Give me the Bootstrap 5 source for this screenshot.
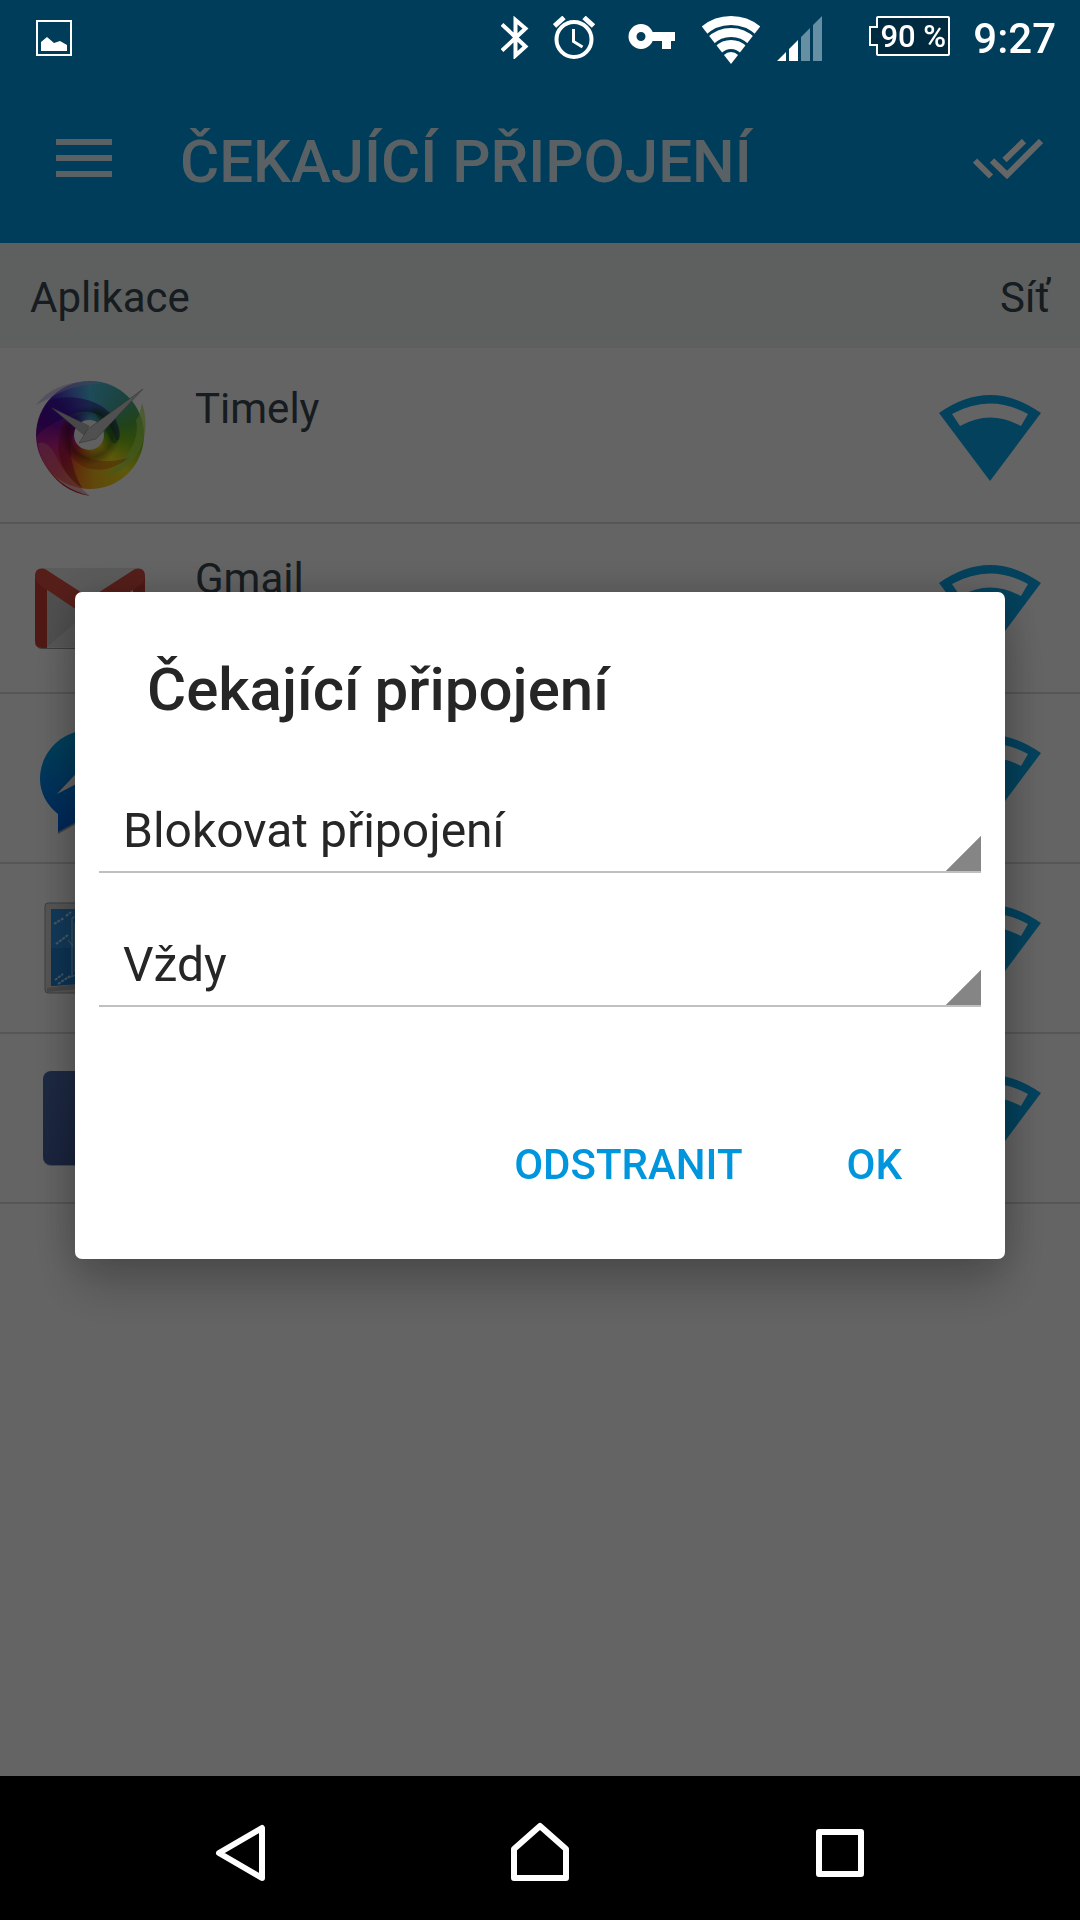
<!DOCTYPE html>
<html lang="cs">
<head>
<meta charset="utf-8">
<meta name="viewport" content="width=device-width, initial-scale=1">
<title>Čekající připojení</title>
<link rel="stylesheet" href="https://cdn.jsdelivr.net/npm/bootstrap@5.3.0/dist/css/bootstrap.min.css">
<style>
  body { font-family: Roboto, "Noto Sans", sans-serif; background: #fafafa; font-size: 42px; line-height: 50px; color: #37474f; }
  svg { display: block; flex: none; }
  .top-area { background: #0099e0; }
  .status-bar { height: 75px; padding: 16px 24px 0 36px; color: #fff; z-index: 1070; line-height: 46px; }
  .status-icons { gap: 17px; }
  .battery-nub { width: 9px; height: 20px; margin: 10px -2px 0 0; border: 2px solid #fff; border-right: 0; background: #002a3f; z-index: 1; }
  .battery-box { width: 74px; height: 40px; border: 2px solid #fff; border-radius: 2px; background: #002a3f; font-size: 31px; line-height: 38px; margin-right: 6px; }
  .app-bar { height: 168px; padding: 0 37px 0 56px; gap: 68px; }
  .app-title { font-size: 60px; line-height: 70px; padding-top: 6px; color: #e1f3fb; }
  .list-head { background: #e9f0ee; padding: 30px 30px 25px; }
  .conn-list { padding-top: 6px; }
  .conn-row { height: 170px; padding: 0 39px 0 30px; gap: 45px; border-bottom: 2px solid #d6d6d6; }
  .conn-name { padding-top: 30px; }
  .app-icon { width: 120px; height: 120px; }
  .timely-wheel { position: relative; }
  .timely-disc { position: absolute; inset: 3px 6px 9px; border-radius: 50%;
    background: conic-gradient(#4bbbe0, #46a8a0 40deg, #55a83c 75deg, #7cbc18 100deg, #e8dc1c 135deg, #efb41c 175deg, #f0781c 200deg, #e02f4a 225deg, #c0208c 255deg, #7a0c9e 285deg, #4c28c0 315deg, #5580dc 340deg, #4bbbe0); }
  .timely-wheel svg { position: relative; }
  .dim-layer { --bs-backdrop-opacity: .6; }
  .dialog-layer { padding: 75px 75px 144px; }
  .dialog-box { border-radius: 7px; padding: 63px 24px 69px; color: #262626; box-shadow: 0 28px 50px rgba(0,0,0,.2), 0 0 40px rgba(0,0,0,.2); }
  .dialog-title { font-size: 60px; line-height: 70px; margin: 0 48px 52px; }
  .spinner-select { appearance: none; display: block; width: 100%; height: 96px; padding: 26px 60px 12px 24px; border: 0; border-bottom: 2px solid #c0c0c0; border-radius: 0; font-size: 48px; line-height: 56px; color: #262626;
    background: linear-gradient(to bottom right, transparent 50%, #858585 calc(50% + 1px)) right bottom / 36px 36px no-repeat; }
  .spinner-select + .spinner-select { margin-top: 38px; }
  .dialog-actions { margin-top: 133px; padding-right: 43px; gap: 32px; }
  .action-btn { border: 0; background: none; color: #0096dd; padding: 0 36px; font-weight: 500; }
  .nav-keys { height: 144px; padding: 0 90px; background: #000; z-index: 1070; }
  .key-btn { border: 0; background: none; padding: 10px 0 0; flex: 1 1 0; }
</style>
<script src="https://cdn.jsdelivr.net/npm/bootstrap@5.3.0/dist/js/bootstrap.bundle.min.js"></script>
</head>
<body>
<svg width="0" height="0" class="position-absolute" aria-hidden="true">
  <symbol id="net" viewBox="0 0 102 86">
    <path fill="#0aa4e8" fill-rule="evenodd" d="M0 18Q51-18 102 18L51 86ZM13 19L21 31Q51 14 82 31L89 19Q51-2 13 19Z"/>
  </symbol>
</svg>
<div class="d-flex flex-column min-vh-100">
  <header class="top-area">
    <div class="status-bar position-relative d-flex justify-content-between align-items-start">
      <svg width="36" height="44" viewBox="0 0 36 44" fill="none" stroke="#fff" stroke-width="2"><path d="M1 5H35V39H1Z"/><path fill="#fff" stroke="none" d="M5 26L11 21L18 27L24 25L31 29V35H5Z"/></svg>
      <div class="status-icons d-flex align-items-start">
        <svg width="35" height="43" viewBox="0 0 35 43" fill="none" stroke="#fff" stroke-width="4"><path d="M1 8.500L24.500 30.500L14.500 39.500V4L24.500 12.500L1 34.500"/></svg>
        <svg width="58" height="44" viewBox="0 0 58 44" fill="none" stroke="#fff" stroke-width="4"><circle cx="21" cy="23.500" r="17.500"/><path d="M1.500 10L11 1.500M31 1.500L40.500 10" stroke-width="5"/><path d="M20.500 13V25.500L29.500 31" stroke-width="3"/></svg>
        <svg width="57" height="43" viewBox="0 0 57 43" fill="none"><circle cx="13" cy="20.500" r="8.500" stroke="#fff" stroke-width="8"/><path fill="#fff" d="M23 16H47V25H43V33H34V25H23Z"/></svg>
        <svg width="58" height="48" viewBox="0 0 58 48" fill="none" stroke="#fff"><clipPath id="cone"><path d="M29 48L-10-2H68Z"/></clipPath><g clip-path="url(#cone)"><circle cx="29" cy="46" r="41.500" stroke-width="9"/><circle cx="29" cy="46" r="29.500" stroke-width="9"/><circle cx="29" cy="46" r="17.500" stroke-width="9"/><circle cx="29" cy="46" r="10" fill="#fff" stroke="none"/></g></svg>
        <svg width="75" height="45" viewBox="0 0 75 45"><path fill="#fff" d="M0 45L9 36V45ZM12 33L21 24V45H12Z"/><path fill="#668fa3" d="M24 21L33 12V45H24ZM36 9L45 0V45H36Z"/></svg>
        <div class="d-flex"><div class="battery-nub"></div><div class="battery-box text-center text-nowrap fw-medium">90&nbsp;%</div></div>
        <div class="fw-medium status-clock">9:27</div>
      </div>
    </div>
    <div class="app-bar d-flex align-items-center">
      <button type="button" class="btn p-0 border-0" aria-label="Menu"><svg width="56" height="40" viewBox="0 0 56 40" fill="#e1f3fb"><path d="M0 0H56V6H0ZM0 16H56V22H0ZM0 32H56V38H0Z"/></svg></button>
      <h1 class="app-title fw-medium mb-0 flex-grow-1 text-nowrap">ČEKAJÍCÍ PŘIPOJENÍ</h1>
      <button type="button" class="btn p-0 border-0" aria-label="Potvrdit vše"><svg width="70" height="40" viewBox="0 0 70 40" fill="none" stroke="#fff" stroke-width="6"><path d="M2 21.500L18 37.500M19 21.500L34 36L68 2M31.500 21L51 2"/></svg></button>
    </div>
  </header>
  <main class="flex-grow-1">
    <div class="list-head d-flex justify-content-between"><span>Aplikace</span><span>Síť</span></div>
    <ul class="conn-list list-unstyled mb-0">
      <li class="conn-row d-flex align-items-center">
        <div class="app-icon timely-wheel">
          <div class="timely-disc"></div>
          <svg width="120" height="120" viewBox="0 0 120 120">
            <defs><radialGradient id="shade"><stop offset=".4" stop-color="#000" stop-opacity="0"/><stop offset=".75" stop-color="#000" stop-opacity=".3"/><stop offset="1" stop-color="#000" stop-opacity="0"/></radialGradient></defs>
            <path fill="#300090" opacity=".5" d="M20 22C45 14 75 24 86 42C92 55 90 65 86 62C80 36 58 26 34 40C20 48 12 50 6 60C7 42 12 30 20 22Z"/>
            <path fill="#b4a0dc" opacity=".55" d="M6 27C22 6 50 0 74 6C54 6 40 8 18 21Z"/>
            <path fill="#1c7030" opacity=".5" d="M62 30C78 30 92 46 88 62C84 72 80 60 72 46Z"/>
            <path fill="#a8dc50" opacity=".7" d="M112 25C124 62 104 92 76 98C100 80 110 60 106 42L109 38Z"/>
            <path fill="#b03008" opacity=".35" d="M42 62C46 80 70 88 98 80C76 100 40 94 36 64Z"/>
            <path fill="#8c0c30" opacity=".5" d="M34 42C22 70 30 96 52 110C40 88 38 70 44 52Z"/>
            <path fill="#e07090" opacity=".55" d="M8 66C12 94 32 112 60 118C46 106 34 96 26 78C20 66 12 62 8 66Z"/>
            <path fill="#b82c28" d="M14 84C26 104 40 112 60 118C40 115 24 104 14 84Z"/>
            <circle cx="60" cy="57" r="30" fill="url(#shade)"/>
            <circle cx="59" cy="57" r="15" fill="#efefef"/>
            <path fill="#b4b4b4" stroke="#888" stroke-width=".5" d="M22 30L59 48L54 57Z"/>
            <path fill="#c8c8c8" stroke="#777" stroke-width=".5" d="M113 11L58 51L49 65L66 61Z"/>
          </svg>
        </div>
        <div class="conn-name flex-grow-1 align-self-start">Timely</div>
        <svg width="102" height="86"><use href="#net"/></svg>
      </li>
      <li class="conn-row d-flex align-items-center">
        <svg class="app-icon" viewBox="0 0 120 120"><rect x="5" y="21" width="110" height="80" rx="7" fill="#999"/><rect x="5" y="20" width="110" height="80" rx="7" fill="#e4e4e4"/><path fill="#c6c6c6" d="M17 40L60 72L17 99Z"/><path fill="#d8d8d8" d="M17 99L56 66H64L103 99Z"/><path fill="#c63e32" d="M5 28V93Q5 100 12 100H17V38ZM115 28V93Q115 100 108 100H103V38Z"/><path fill="#d64c40" d="M5 27Q6 19 15 21L60 50L105 21Q114 19 115 27Q115 34 110 37L60 71L10 37Q5 34 5 27Z"/></svg>
        <div class="conn-name flex-grow-1 align-self-start">Gmail</div>
        <svg width="102" height="86"><use href="#net"/></svg>
      </li>
      <li class="conn-row d-flex align-items-center justify-content-between">
        <svg class="app-icon" viewBox="0 0 120 120"><defs><linearGradient id="msg" x2="0" y2="1"><stop stop-color="#00a4e0"/><stop offset="1" stop-color="#0060e0"/></linearGradient></defs><path fill="#444" opacity=".5" d="M28 95V116L48 105Z"/><path fill="url(#msg)" d="M60 12C32 12 10 34 10 61C10 75 17 87 28 96V114L46 104Q53 106 60 106C88 106 110 87 110 61C110 34 88 12 60 12Z"/><path fill="#f4f4f4" d="M27 76L54 47L67 60L92 47L65 76L52 63Z"/></svg>
        <svg width="102" height="86"><use href="#net"/></svg>
      </li>
      <li class="conn-row d-flex align-items-center justify-content-between">
        <svg class="app-icon" viewBox="0 0 120 120"><rect x="15" y="15" width="90" height="90" rx="3" fill="#d4d4d4" stroke="#999"/><path fill="#b0b0b0" d="M17 100L104 88V96L17 104Z"/><path fill="#2c90e0" d="M21 21H99V92L21 98Z"/><path fill="#2080d0" d="M21 60H99V92L21 98Z"/><path stroke="#b8dcf4" stroke-width="2" fill="none" stroke-dasharray="3 1" d="M24 36L34 30M36 28L41 24M26 56L38 47M25 92L33 86M28 96L40 88"/><path stroke="#b8dcf4" fill="none" d="M38 52L43 58M38 90L46 87M42 30V88M45 35V84M42 30L50 26"/></svg>
        <svg width="102" height="86"><use href="#net"/></svg>
      </li>
      <li class="conn-row d-flex align-items-center justify-content-between">
        <svg class="app-icon" viewBox="0 0 120 120"><defs><linearGradient id="fb" x2="1" y2="1"><stop stop-color="#4a68a8"/><stop offset="1" stop-color="#3a5090"/></linearGradient></defs><rect x="13" y="15" width="94" height="93" rx="8" fill="#888" opacity=".6"/><rect x="13" y="13" width="94" height="94" rx="8" fill="url(#fb)"/></svg>
        <svg width="102" height="86"><use href="#net"/></svg>
      </li>
    </ul>
  </main>
  <nav class="nav-keys position-relative d-flex align-items-center">
    <button type="button" class="key-btn d-flex justify-content-center" aria-label="Zpět"><svg width="50" height="58" viewBox="0 0 50 58" fill="none" stroke="#fff" stroke-width="6" stroke-linejoin="round"><path d="M47 4V54L4 29Z"/></svg></button>
    <button type="button" class="key-btn d-flex justify-content-center" aria-label="Domů"><svg width="58" height="62" viewBox="0 0 58 62" fill="none" stroke="#fff" stroke-width="6" stroke-linejoin="round"><path d="M3 56V27L29 4L55 27V56Z"/></svg></button>
    <button type="button" class="key-btn d-flex justify-content-center" aria-label="Poslední"><svg width="50" height="50" viewBox="0 0 50 50" fill="none" stroke="#fff" stroke-width="6" stroke-linejoin="round"><path d="M4 4H46V46H4Z"/></svg></button>
  </nav>
</div>
<div class="modal-backdrop show dim-layer"></div>
<div class="modal dialog-layer d-flex align-items-center" tabindex="-1" role="dialog" aria-modal="true" aria-labelledby="dlgTitle">
  <form class="dialog-box bg-white w-100">
    <h2 class="dialog-title fw-medium" id="dlgTitle">Čekající připojení</h2>
    <select class="spinner-select" aria-label="Akce"><option>Blokovat připojení</option></select>
    <select class="spinner-select" aria-label="Platnost"><option>Vždy</option></select>
    <div class="dialog-actions d-flex justify-content-end">
      <button type="button" class="action-btn">ODSTRANIT</button>
      <button type="button" class="action-btn">OK</button>
    </div>
  </form>
</div>
</body>
</html>
